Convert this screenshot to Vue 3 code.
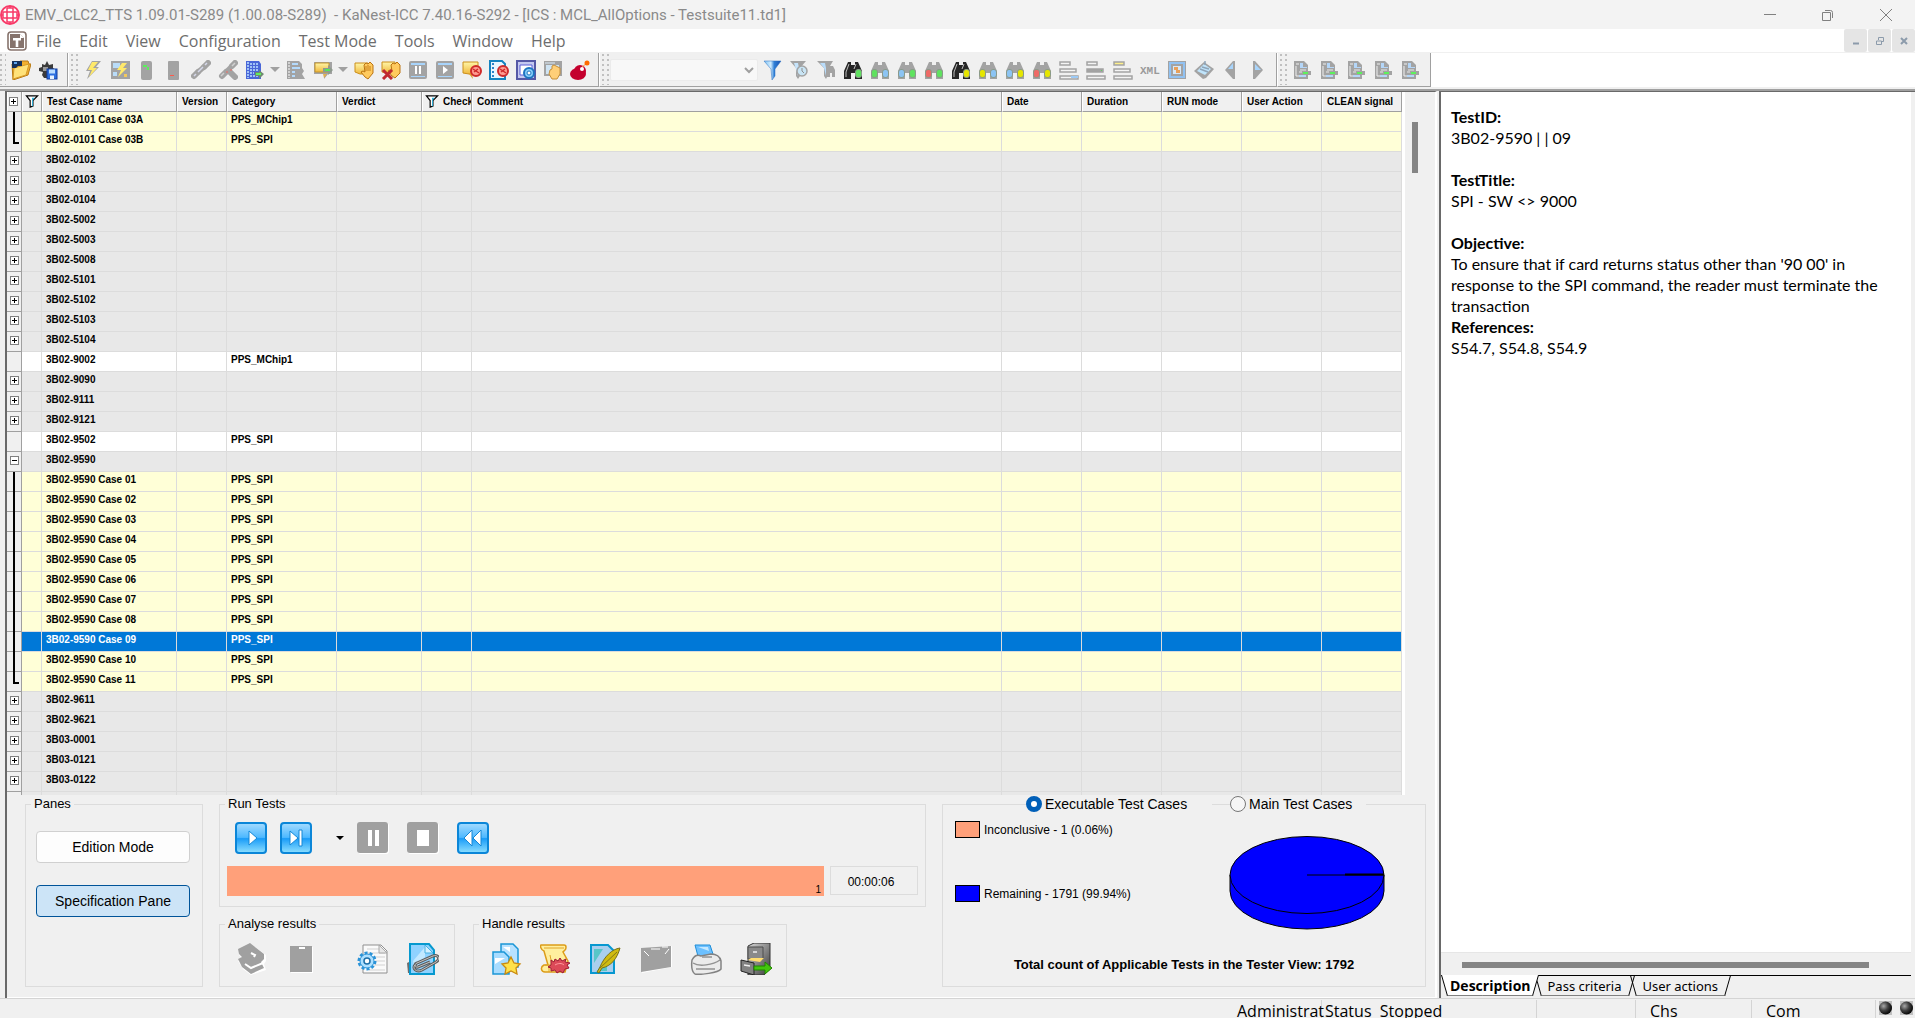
<template>
  <div class="app">
    <svg class="sprite" width="0" height="0" aria-hidden="true">
      <defs>
        <linearGradient id="gBlue" x1="0" y1="0" x2="0" y2="1">
          <stop offset="0" stop-color="#a6dcff" />
          <stop offset="0.48" stop-color="#4db8ff" />
          <stop offset="0.52" stop-color="#1a9cf8" />
          <stop offset="1" stop-color="#8fe0ff" />
        </linearGradient>
        <linearGradient id="gGold" x1="0" y1="0" x2="0" y2="1">
          <stop offset="0" stop-color="#fff6a8" />
          <stop offset="1" stop-color="#f0b83c" />
        </linearGradient>
        <linearGradient id="gFunnel" x1="0" y1="0" x2="1" y2="0">
          <stop offset="0" stop-color="#7cc0f0" />
          <stop offset="0.4" stop-color="#d0ecff" />
          <stop offset="0.6" stop-color="#2f7fd6" />
          <stop offset="1" stop-color="#1a50b0" />
        </linearGradient>
        <linearGradient id="gSteel" x1="0" y1="0" x2="1" y2="1">
          <stop offset="0" stop-color="#d8d8d8" />
          <stop offset="1" stop-color="#3a3a3a" />
        </linearGradient>
        <radialGradient id="gBall" cx="0.35" cy="0.35" r="0.7">
          <stop offset="0" stop-color="#a8a8a8" />
          <stop offset="0.5" stop-color="#404040" />
          <stop offset="1" stop-color="#000" />
        </radialGradient>
      </defs>

      <symbol id="logo" viewBox="0 0 20 20">
        <circle cx="10" cy="10" r="9" fill="#fff" stroke="#f83a68" stroke-width="2" />
        <path d="M7 3v4H3M7 3h6v4H3v6h4v4h6v-4h4V7h-4M7 7v6h6V7M10 1v2M10 17v2M1 10h2M17 10h2" fill="none" stroke="#f83a68" stroke-width="1.500" />
      </symbol>
      <symbol id="mdi" viewBox="0 0 20 20">
        <rect x="1" y="1" width="18" height="18" rx="3" fill="#fff" stroke="#86736c" stroke-width="1.600" />
        <path d="M3 3h10l4 4v10H3z" fill="#86736c" />
        <path d="M13 3v4h4" fill="#fff" />
        <path d="M6 7h8v2.500h-2.700V16H8.700V9.500H6z" fill="#fff" />
      </symbol>
      <symbol id="open" viewBox="0 0 20 20">
        <path d="M1 4h6l2-3h8l1 3h2l-3 11-15 5z" fill="#f2b030" stroke="#b87914" />
        <path d="M3 8l15-4-3 11-13 4z" fill="#ffe27a" stroke="#d69a28" />
        <path d="M1 1h10v5H7L5 8H1z" fill="#16325c" />
        <path d="M3 2h3v2H3z" fill="#5fa6f0" />
      </symbol>
      <symbol id="save" viewBox="0 0 20 20">
        <path d="M1 8l3-1V4l3 1 2-4 2 4 4-1v4l3 2-3 2v6H6l-2-3 1-3-4-1z" fill="#3b3b3b" />
        <path d="M5 7h5v4H5z" fill="#999" />
        <rect x="9" y="9" width="10" height="10" fill="#2d6fe0" stroke="#123c9c" />
        <path d="M11 9.500h6v4h-6z" fill="#b9dcff" />
        <path d="M12 15.500h4V19h-4z" fill="#e8f3ff" />
      </symbol>
      <symbol id="bolt" viewBox="0 0 20 20">
        <path d="M9 1h9l-5 6h3L4 19l3-8H3z" fill="#a3a3a3" />
        <path d="M9 2h6l-5 6h4l-8 9 3-7H5z" fill="#ffe96a" />
      </symbol>
      <symbol id="boltTable" viewBox="0 0 20 20">
        <path d="M1 1h19v18H1z" fill="#a3a3a3" />
        <path d="M3 3h7v5H3zM3 12h4v4H3z" fill="#b9dcf8" />
        <path d="M12 3h5l-4 5h4l-9 9 3-7H7z" fill="#ffe96a" />
        <path d="M14 14h3v3h-3z" fill="#f3c95b" />
      </symbol>
      <symbol id="devGreen" viewBox="0 0 20 20">
        <rect x="4" y="1" width="11" height="19" rx="2" fill="#a3a3a3" />
        <path d="M6 5h4v2h2v3h-2V7H6z" fill="#5cf05c" />
      </symbol>
      <symbol id="devRed" viewBox="0 0 20 20">
        <rect x="4" y="1" width="11" height="19" rx="1" fill="#a3a3a3" />
        <path d="M6 15h4v1H6z" fill="#ff5a4a" />
      </symbol>
      <symbol id="link" viewBox="0 0 20 20">
        <path d="M3 16l4-4M13 7l4-4" stroke="#a3a3a3" stroke-width="6" stroke-linecap="round" />
        <path d="M6 13l8-7" stroke="#a3a3a3" stroke-width="5" />
        <path d="M7 12l5-5M3 16l2-2M14 5l2-2" stroke="#d5d8ea" stroke-width="1.500" />
      </symbol>
      <symbol id="unlink" viewBox="0 0 20 20">
        <path d="M4 16l4-4M14 6l3-3M12 12l5 5" stroke="#a3a3a3" stroke-width="6" stroke-linecap="round" />
        <path d="M8 12l6-6" stroke="#a3a3a3" stroke-width="5" />
        <path d="M3 16l3-3M14 6l3-3" stroke="#d0d0d0" stroke-width="1.500" />
        <path d="M8 12h2M12 10h2" stroke="#ef6a60" />
      </symbol>
      <symbol id="listGo" viewBox="0 0 20 20">
        <path d="M1 1h13l2 3v15H1z" fill="#4a67d8" />
        <path d="M3 2v16M5 4h8M5 7h9M5 10h8M5 13h4M5 16h8" stroke="#bfe2ff" stroke-width="1.500" stroke-dasharray="2 1" />
        <path d="M10 12h4v-2l5 4-5 5v-3h-4z" fill="#6f8a70" />
        <path d="M11 13h5v2h-5z" fill="#5ff05f" />
      </symbol>
      <symbol id="listFind" viewBox="0 0 20 20">
        <path d="M1 1h12l3 3v4l2 3-2 3 3 5H1z" fill="#a3a3a3" />
        <path d="M3 2v16" stroke="#fff" stroke-dasharray="2 1" />
        <path d="M6 3h6v2H6zM6 7h8v2H6zM6 11h3v2H6zM6 15h3v2H6z" fill="#b4dafc" />
      </symbol>
      <symbol id="noteGo" viewBox="0 0 20 20">
        <path d="M1 2h18v12h-4l-4 5v-5H1z" fill="#a3a3a3" />
        <path d="M2 3h14v9H2z" fill="url(#gGold)" stroke="#c8962a" />
        <path d="M10 14h4l-3 4z" fill="#e0b050" />
        <path d="M10 8h5V5l5 5-5 5v-3h-5z" fill="#8f9b8f" />
        <path d="M12 9h5v2h-5z" fill="#57e857" />
      </symbol>
      <symbol id="noteHand" viewBox="0 0 20 20">
        <path d="M1 3h13v11H6l-5-2z" fill="url(#gGold)" stroke="#cc8f1a" />
        <path d="M10 5l2-2 2 1 2-2 3 3v8l-5 6-3-2-4-5 2-1 2 1z" fill="#ffca5e" stroke="#bb7412" />
        <path d="M12 6v5M14 5v6M16 6v5" stroke="#c67e18" />
      </symbol>
      <symbol id="noteHandX" viewBox="0 0 20 20">
        <path d="M1 2h13v11H6l-5-1z" fill="url(#gGold)" stroke="#cc8f1a" />
        <path d="M10 5l2-2 2 1 2-2 3 3v8l-5 5-3-2-4-5 2-1 2 1z" fill="#ffca5e" stroke="#bb7412" />
        <path d="M2 10l9 9M11 10l-9 9" stroke="#c02a30" stroke-width="3" />
      </symbol>
      <symbol id="pauseBox" viewBox="0 0 20 20">
        <rect x="1" y="1" width="18" height="18" rx="2" fill="#a3a3a3" />
        <path d="M3 3h14v2H3zM3 16h14v1H3z" fill="#a8d4fb" />
        <path d="M8 6v8M12 6v8" stroke="#fff" stroke-width="2" />
      </symbol>
      <symbol id="playBox" viewBox="0 0 20 20">
        <rect x="1" y="1" width="18" height="18" rx="2" fill="#a3a3a3" />
        <path d="M3 3h14v2H3zM3 16h14v1H3z" fill="#a8d4fb" />
        <path d="M8 6l5 4-5 4z" fill="#fff" />
      </symbol>
      <symbol id="noteStop" viewBox="0 0 20 20">
        <path d="M1 2h15v12H7l-6-1z" fill="url(#gGold)" stroke="#cc8f1a" />
        <path d="M7 14l4 5-1-5z" fill="#dfa030" />
        <circle cx="14" cy="11" r="5" fill="#ff9b90" stroke="#cf2a2a" stroke-width="2" />
        <path d="M11 9l6 4M12 12l4-3" stroke="#cf2a2a" stroke-width="1.500" />
      </symbol>
      <symbol id="filmStop" viewBox="0 0 20 20">
        <path d="M1 1h12l3 3v15H1z" fill="#eaf6ff" stroke="#1583c0" stroke-width="2" />
        <path d="M4 3v15" stroke="#2f83c8" stroke-width="2" stroke-dasharray="2 2" />
        <circle cx="14" cy="11" r="5" fill="#ff9b90" stroke="#cf2a2a" stroke-width="2" />
        <path d="M11 9l6 4M12 12l4-3" stroke="#cf2a2a" stroke-width="1.500" />
      </symbol>
      <symbol id="target" viewBox="0 0 20 20">
        <path d="M1 1h18v18H1z" fill="#c4c8f0" stroke="#5558a6" stroke-width="2" />
        <path d="M4 5h12v10H4z" fill="#fff" stroke="#5a5ed8" />
        <circle cx="13" cy="13" r="5" fill="#86cdf8" stroke="#1c74c0" stroke-width="2" />
        <circle cx="13" cy="13" r="2" fill="#fff" stroke="#1c74c0" />
      </symbol>
      <symbol id="winHand" viewBox="0 0 20 20">
        <path d="M1 1h18v15H1z" fill="#a3a3a3" />
        <path d="M3 5h13v9H3z" fill="#cfe4f4" />
        <path d="M2 3h10" stroke="#dcecfa" />
        <path d="M7 10l2-1V6l2-1 2 1 2 1 2 1v6l-3 5H9l-3-5z" fill="#ffcf78" stroke="#c58f3a" />
      </symbol>
      <symbol id="bomb" viewBox="0 0 20 20">
        <ellipse cx="8" cy="14" rx="8" ry="6" fill="#c4002e" />
        <ellipse cx="10" cy="11" rx="6" ry="6" fill="#c4002e" />
        <path d="M12 7l5-4" stroke="#ff9a40" />
        <circle cx="12" cy="9" r="2" fill="#fff" />
        <circle cx="17" cy="3" r="2.500" fill="#ff6a00" />
      </symbol>
      <symbol id="funnel" viewBox="0 0 20 20">
        <path d="M2 1h17l-6 8v7l-3 4-1-11z" fill="url(#gFunnel)" stroke="#2b6fc0" stroke-width="0.500" />
      </symbol>
      <symbol id="funnelFind" viewBox="0 0 20 20">
        <path d="M1 1h16l-6 7v8l-2 3-2-3V8z" fill="#a3a3a3" />
        <path d="M5 3h4l1 5-1 8z" fill="#c5e4fc" />
        <circle cx="13" cy="11" r="5" fill="#c8e4f4" stroke="#a3a3a3" stroke-width="1.500" />
        <path d="M13 8v3l2 2" stroke="#8d8d8d" fill="none" />
      </symbol>
      <symbol id="funnelBin" viewBox="0 0 20 20">
        <path d="M1 1h16l-3 5h3l2 4v7h-3v-4h-2v4h-3l-1 2-2-3V8z" fill="#a3a3a3" />
        <path d="M4 3h5l1 5v8L8 8z" fill="#b9dcfa" />
      </symbol>
      <symbol id="bin" viewBox="0 0 20 20">
        <path d="M5 2h3v3h4V2h3l4 9v8h-7v-6H8v6H1v-8z" fill="currentColor" />
      </symbol>
      <symbol id="binShine" viewBox="0 0 20 20">
        <path d="M5 2h3v3h4V2h3l4 9v8h-7v-6H8v6H1v-8z" fill="#262626" />
        <path d="M6 4L3 12v5M13 4l-2 5" stroke="#bdbdbd" fill="none" />
      </symbol>
      <symbol id="barsLow" viewBox="0 0 20 20">
        <path d="M1 2h10v3H1zM1 9h16v3H1zM1 16h18v3H1z" fill="#f4f4f4" stroke="#a3a3a3" stroke-width="1.500" />
        <path d="M12 16h7v2h-7z" fill="#9ccaf6" />
      </symbol>
      <symbol id="barsMid" viewBox="0 0 20 20">
        <path d="M1 2h10v3H1zM1 16h18v3H1z" fill="#f4f4f4" stroke="#a3a3a3" stroke-width="1.500" />
        <path d="M1 9h16v3H1z" fill="#a3a3a3" stroke="#a3a3a3" stroke-width="1.500" />
        <path d="M15 10h1v1h-1z" fill="#5fd05f" />
      </symbol>
      <symbol id="barsTop" viewBox="0 0 20 20">
        <path d="M1 9h16v3H1zM1 16h18v3H1z" fill="#f4f4f4" stroke="#a3a3a3" stroke-width="1.500" />
        <path d="M1 2h10v3H1z" fill="#fff08a" stroke="#a3a3a3" stroke-width="1.500" />
      </symbol>
      <symbol id="xml" viewBox="0 0 20 20">
        <text x="0" y="14" font-family="Liberation Mono, monospace" font-size="11" font-weight="700" fill="#9a9a9a">XML</text>
      </symbol>
      <symbol id="frame" viewBox="0 0 20 20">
        <path d="M1 1h18v18H1z" fill="#a3a3a3" />
        <path d="M3 3h14v14H3z" fill="none" stroke="#91c2f2" stroke-width="2" />
        <path d="M6 6h8v8H6z" fill="#d7e8f7" />
        <path d="M7 7h4v3H7zM9 10h4v3H9z" fill="#e8a05a" />
      </symbol>
      <symbol id="diamond" viewBox="0 0 20 20">
        <path d="M10 2l10 7-8 9-3 1-9-8z" fill="#a3a3a3" />
        <path d="M10 4l7 5-6 6-8-4z" fill="#bfe4fb" />
        <path d="M6 9l8 3M8 7l7 2M11 1v4" stroke="#8fa4b8" stroke-width="1.500" />
      </symbol>
      <symbol id="prev" viewBox="0 0 20 20">
        <path d="M14 1v18h-2L4 10l8-9z" fill="#a3a3a3" />
        <path d="M12 3v6H7z" fill="#a8d4fb" />
      </symbol>
      <symbol id="next" viewBox="0 0 20 20">
        <path d="M5 1v18h2l8-9-8-9z" fill="#a3a3a3" />
        <path d="M7 4v6h6z" fill="#a8d4fb" />
      </symbol>
      <symbol id="docGo" viewBox="0 0 20 20">
        <path d="M2 1h10l4 4v6h3v4h-3v4H2z" fill="#a3a3a3" />
        <path d="M4 4h3M4 6v10h8" stroke="#f0f0f0" fill="none" />
        <path d="M8 3h3v4h4v1H8zM7 15h7v2H7z" fill="#b4d6f8" />
        <path d="M8 10h6M7 12h3" stroke="#e8e8e8" />
        <path d="M11 12h5v2h-5z" fill="#5df05d" />
      </symbol>
      <symbol id="thFilter" viewBox="0 0 14 14">
        <path d="M1 1h12L8 6v6l-3 1V6z" fill="#fff" stroke="#000" stroke-width="1.300" />
        <path d="M7 3h3L8 5v7H7z" fill="#2fb4e0" />
      </symbol>

      <symbol id="runPlay" viewBox="0 0 32 32">
        <rect x="1" y="1" width="30" height="30" rx="3" fill="url(#gBlue)" stroke="#0b86d8" stroke-width="2" />
        <path d="M14 9l8 7-8 7z" fill="#fff" stroke="#1487d6" />
      </symbol>
      <symbol id="runStep" viewBox="0 0 32 32">
        <rect x="1" y="1" width="30" height="30" rx="3" fill="url(#gBlue)" stroke="#0b86d8" stroke-width="2" />
        <path d="M10 9l8 7-8 7zM19 8h3v16h-3z" fill="#fff" stroke="#1487d6" />
      </symbol>
      <symbol id="runPause" viewBox="0 0 32 32">
        <rect x="1" y="1" width="31" height="31" rx="3" fill="#fff" />
        <rect width="31" height="31" rx="3" fill="#a0a0a0" />
        <path d="M11 8h4v16h-4zM18 8h4v16h-4z" fill="#fff" />
      </symbol>
      <symbol id="runStop" viewBox="0 0 32 32">
        <rect x="1" y="1" width="31" height="31" rx="3" fill="#fff" />
        <rect width="31" height="31" rx="3" fill="#a0a0a0" />
        <path d="M10 8h12v16H10z" fill="#fff" />
      </symbol>
      <symbol id="runBack" viewBox="0 0 32 32">
        <rect x="1" y="1" width="30" height="30" rx="3" fill="url(#gBlue)" stroke="#0b86d8" stroke-width="2" />
        <path d="M15 8v16l-8-8zM24 8v16l-8-8z" fill="#fff" stroke="#1487d6" />
      </symbol>
      <symbol id="books" viewBox="0 0 32 32">
        <path d="M3 7l12-6 15 11v6l-2 3 2 6-15 5-8-6-5-8 4-2-3-4z" fill="#fff" />
        <path d="M2 6l12-6 14 11v5l-3 3 3 6-13 6-9-7-4-8 4-2-3-3z" fill="#a0a0a0" />
        <path d="M9 21l6 4 12-5M15 10l4 2-1 2" stroke="#fff" stroke-width="2" fill="none" />
      </symbol>
      <symbol id="board" viewBox="0 0 32 32">
        <path d="M5 4h22v26H5z" fill="#fff" />
        <path d="M4 3h22v26H4z" fill="#a0a0a0" />
        <path d="M14 6V5h5" stroke="#fff" stroke-width="2" fill="none" />
      </symbol>
      <symbol id="docGear" viewBox="0 0 32 32">
        <path d="M6 2h18l6 6v22H6z" fill="#fafafa" stroke="#8f8f8f" />
        <path d="M10 6h12M10 10h18M17 14h11M18 18h10M17 22h11M12 27h16" stroke="#e0e0e0" stroke-width="1.500" />
        <path d="M22 2v8h8z" fill="#e6e6e6" stroke="#a8a8a8" />
        <circle cx="10" cy="18" r="8" fill="none" stroke="#2a93d8" stroke-width="3" stroke-dasharray="3 2" />
        <circle cx="10" cy="18" r="7" fill="#aee0ff" stroke="#2a93d8" />
        <circle cx="10" cy="18" r="3" fill="#fff" stroke="#1c6fa8" stroke-width="1.500" />
      </symbol>
      <symbol id="docClip" viewBox="0 0 32 32">
        <path d="M0 20l4-2v12H1z" fill="#6d6d6d" />
        <path d="M3 1h19l5 6v24H3z" fill="#8fd2ff" stroke="#0699cf" stroke-width="2" />
        <path d="M6 18L18 4v10L8 27z" fill="#c2e8ff" />
        <path d="M18 2v8h8z" fill="#d5f0ff" stroke="#4ab0e0" />
        <path d="M23 19l-12 5c-3 1-4-3-1-4l16-7c5-2 8 3 3 6l-14 8c-6 3-10-2-7-5" fill="none" stroke="#5d5d5d" stroke-width="3" />
        <path d="M23 19l-12 5c-3 1-4-3-1-4l16-7c5-2 8 3 3 6l-14 8c-6 3-10-2-7-5" fill="none" stroke="#c4c4c4" />
      </symbol>
      <symbol id="docStar" viewBox="0 0 32 32">
        <path d="M11 1h12l5 5v18H11z" fill="#b8e2ff" stroke="#1b96d6" stroke-width="1.500" />
        <path d="M3 9h11l5 5v17H3z" fill="#a8dcff" stroke="#1b96d6" stroke-width="1.500" />
        <path d="M5 15h10l-10 6zM13 4h7v5z" fill="#fff" />
        <path d="M21 14l3 6 6 1-4 4 1 6-6-3-6 3 1-6-4-4 6-1z" fill="#ffe14a" stroke="#c98a10" stroke-width="1.300" />
      </symbol>
      <symbol id="scroll" viewBox="0 0 32 32">
        <path d="M1 2h23c3 0 2 4 1 5l-2 2 5 9-3 11H5c-4 0-5-5-1-7h4L4 8C1 7 0 3 1 2z" fill="#ffef9e" stroke="#dc9c18" stroke-width="1.500" />
        <path d="M4 5h20M10 12l2 10H5M9 22v7" stroke="#e0a428" fill="none" />
        <path d="M11 17l3 2 1-3 3 2 2-3 2 3 4-2-1 3 5 1-3 2 2 3-4 1-2 4-3-2-3 2-2-3-4 1v-3l-3-1 3-2z" fill="#dc4a58" stroke="#9c1c34" />
        <path d="M15 22c3-2 7-2 9 0" stroke="#ff9aa0" fill="none" />
      </symbol>
      <symbol id="docFeather" viewBox="0 0 32 32">
        <path d="M1 2h17l6 6v22H1z" fill="#a9cfee" stroke="#0898d0" stroke-width="2" />
        <path d="M4 6h9L4 20zM7 28l10-12v12z" fill="#58c6c8" />
        <path d="M30 5c-8 1-16 9-20 19l-3 5 2 1 3-5c9-2 15-9 18-20z" fill="#d0bb10" stroke="#77701c" />
        <path d="M27 9L10 25" stroke="#857818" />
      </symbol>
      <symbol id="envelope" viewBox="0 0 32 32">
        <path d="M2 6l30-3v21L2 30z" fill="#fff" />
        <path d="M1 5l30-2v21L1 29z" fill="#a0a0a0" />
        <path d="M4 8l5 5M29 6l-4 5M11 6h9M22 4h6" stroke="#fff" />
      </symbol>
      <symbol id="printer" viewBox="0 0 32 32">
        <path d="M5 2h15l4 12-15 3z" fill="#6cc0ff" stroke="#1e8ed8" />
        <path d="M8 4h10l1 4z" fill="#c4e8ff" />
        <path d="M2 17c2-4 5-6 9-4l10-2c6 0 9 3 10 7v8c-3 4-21 6-26 5-3-2-4-6-3-14z" fill="#ebebeb" stroke="#828282" stroke-width="1.500" />
        <path d="M3 20c6 4 20 2 27-3M6 26h19M12 14h10" stroke="#929292" stroke-width="1.500" fill="none" />
      </symbol>
      <symbol id="cabinet" viewBox="0 0 32 32">
        <path d="M8 3l6-3h16v25l-6 7H8z" fill="url(#gSteel)" stroke="#333" />
        <path d="M8 4h15v12H8z" fill="#8a8a8a" stroke="#4c4c4c" />
        <path d="M8 17l3-2h13l-4 4z" fill="#ffdd70" />
        <path d="M1 17l13 3v12L1 28z" fill="#828282" stroke="#222" />
        <path d="M4 22l6 1M13 9h4" stroke="#eee" stroke-width="1.500" />
        <path d="M14 23h11v-4l7 6-7 6v-4H14z" fill="#42c60c" stroke="#218400" />
      </symbol>
    </svg>

    <header class="titlebar">
      <svg class="icon"><use href="#logo" /></svg>
      <h1>EMV_CLC2_TTS 1.09.01-S289 (1.00.08-S289)&nbsp; - KaNest-ICC 7.40.16-S292 - [ICS : MCL_AllOptions - Testsuite11.td1]</h1>
      <div class="window-controls">
        <button aria-label="Minimize"><svg width="12" height="12"><path d="M0 5.500h12" /></svg></button>
        <button aria-label="Restore"><svg width="12" height="12"><path d="M0.500 3.500h8v8h-8zM3 1.500h5.500a2 2 0 0 1 2 2V9" /></svg></button>
        <button aria-label="Close"><svg width="12" height="12"><path d="M0 0l12 12M12 0L0 12" /></svg></button>
      </div>
    </header>

    <nav class="menubar">
      <svg class="icon"><use href="#mdi" /></svg>
      <button v-for="item in menus" :key="item">{{ item }}</button>
      <div class="mdi-controls">
        <button aria-label="Minimize document"><svg width="8" height="8"><path d="M1 6.500h6" stroke-width="2" /></svg></button>
        <button aria-label="Restore document"><svg width="8" height="8"><path d="M0.500 4h5v3.500h-5zM2.500 3V0.500h5v4H6" /></svg></button>
        <button aria-label="Close document"><svg width="8" height="8"><path d="M1 1l6 6M7 1L1 7" stroke-width="2" /></svg></button>
      </div>
    </nav>

    <div class="toolbars">
      <div v-for="(bar, index) in toolbars" :key="index" class="toolbar">
        <span class="grip"></span>
        <select v-if="bar.combo" class="combo" aria-label="Filter">
          <option></option>
        </select>
        <template v-for="tool in bar.tools" :key="tool.label">
          <button class="tool" :aria-label="tool.label">
            <svg class="icon" :class="{ dim: tool.dim }"><use :href="'#' + tool.icon" /></svg>
            <span v-if="tool.dot" class="dot" :style="{ background: tool.dot }"></span>
            <span v-if="tool.mark" class="mark" :style="{ background: tool.mark }"></span>
          </button>
          <button v-if="tool.menu" class="drop" :aria-label="tool.label + ' menu'"></button>
        </template>
      </div>
    </div>

    <main class="workspace">
      <section class="tester">
        <div class="grid-wrap">
          <div class="grid">
            <table>
              <colgroup>
                <col v-for="col in columns" :key="col.key" :class="'col-' + col.key" />
              </colgroup>
              <thead>
                <tr>
                  <th v-for="col in columns" :key="col.key">
                    <button v-if="col.key === 'tree'" class="expander" aria-label="Expand all">
                      <svg width="9" height="9"><path d="M2 4.500h5M4.500 2v5" /></svg>
                    </button>
                    <svg v-if="col.filter" class="filter"><use href="#thFilter" /></svg>
                    <span>{{ col.label }}</span>
                  </th>
                </tr>
              </thead>
              <tbody>
                <tr v-for="row in rows" :key="row.name" :class="[row.type, { selected: row.name === selected }]" @click="selected = row.name">
                  <td class="tree" :class="row.line">
                    <button v-if="row.type === 'group'" class="expander" :aria-label="row.open ? 'Collapse' : 'Expand'">
                      <svg width="9" height="9"><path :d="row.open ? 'M2 4.500h5' : 'M2 4.500h5M4.500 2v5'" /></svg>
                    </button>
                  </td>
                  <td></td>
                  <td>{{ row.name }}</td>
                  <td></td>
                  <td>{{ row.category }}</td>
                  <td v-for="n in 8" :key="n"></td>
                </tr>
              </tbody>
            </table>
          </div>
          <div class="vscroll"><div class="thumb"></div></div>
        </div>

        <div class="controls">
          <fieldset class="panes">
            <legend>Panes</legend>
            <button>Edition Mode</button>
            <button class="pressed">Specification Pane</button>
          </fieldset>

          <div class="middle">
            <fieldset class="run">
              <legend>Run Tests</legend>
              <div class="run-buttons">
                <button aria-label="Run"><svg><use href="#runPlay" /></svg></button>
                <button aria-label="Run step"><svg><use href="#runStep" /></svg></button>
                <button class="run-menu" aria-label="Run options"></button>
                <button aria-label="Pause"><svg><use href="#runPause" /></svg></button>
                <button aria-label="Stop"><svg><use href="#runStop" /></svg></button>
                <button aria-label="Rewind"><svg><use href="#runBack" /></svg></button>
              </div>
              <div class="run-progress">
                <div class="progress"><span>1</span></div>
                <div class="timer">00:00:06</div>
              </div>
            </fieldset>
            <div class="results">
              <fieldset class="analyse">
                <legend>Analyse results</legend>
                <div class="result-buttons">
                  <button v-for="icon in analyseIcons" :key="icon" :class="icon" :aria-label="icon">
                    <svg><use :href="'#' + icon" /></svg>
                  </button>
                </div>
              </fieldset>
              <fieldset class="handle">
                <legend>Handle results</legend>
                <div class="result-buttons">
                  <button v-for="icon in handleIcons" :key="icon" :aria-label="icon">
                    <svg><use :href="'#' + icon" /></svg>
                  </button>
                </div>
              </fieldset>
            </div>
          </div>

          <div class="stats">
            <div class="modes">
              <label class="mode-exec"><input v-model="mode" type="radio" name="mode" value="exec" />Executable Test Cases</label>
              <label class="mode-main"><input v-model="mode" type="radio" name="mode" value="main" />Main Test Cases</label>
            </div>
            <div class="chart">
              <ul>
                <li v-for="entry in legend" :key="entry.label">
                  <span class="swatch" :style="{ background: entry.color }"></span>{{ entry.label }}
                </li>
              </ul>
              <svg class="pie" width="156" height="96" viewBox="0 0 156 96">
                <path d="M1 40v16a77 38 0 0 0 154 0V40z" fill="#00f" stroke="#000" />
                <ellipse cx="78" cy="40" rx="77" ry="38.500" fill="#00f" stroke="#000" />
                <path d="M78 40h77" stroke="#000" />
                <path d="M116 39.500h39" stroke="#000" stroke-width="2" />
              </svg>
            </div>
            <p class="total">Total count of Applicable Tests in the Tester View: 1792</p>
          </div>
        </div>
      </section>

      <aside class="spec">
        <article>
          <template v-for="part in description" :key="part.title">
            <h2>{{ part.title }}</h2>
            <p :class="{ tight: part.tight }">{{ part.text }}</p>
          </template>
        </article>
        <div class="hscroll"><div class="thumb"></div></div>
        <div class="tabs">
          <button v-for="tab in tabs" :key="tab" :class="{ active: tab === activeTab }" @click="activeTab = tab">{{ tab }}</button>
        </div>
      </aside>
    </main>

    <footer class="statusbar">
      <span class="user">Administrat</span>
      <span class="state">Status&nbsp; Stopped</span>
      <span class="blank"></span>
      <span class="chs">Chs</span>
      <span class="com">Com</span>
      <span class="lamps">
        <svg v-for="n in 2" :key="n" width="13" height="14"><rect width="13" height="14" fill="#c0c0c0" /><circle cx="6.500" cy="7" r="6.500" fill="url(#gBall)" /></svg>
      </span>
    </footer>
  </div>
</template>

<script setup>
import { ref } from 'vue'

const menus = ['File', 'Edit', 'View', 'Configuration', 'Test Mode', 'Tools', 'Window', 'Help']

const GREEN = '#5fe25f'
const YELLOW = '#e6e600'

const toolbars = [
  {
    tools: [
      { icon: 'open', label: 'Open' },
      { icon: 'save', label: 'Save' }
    ]
  },
  {
    tools: [
      { icon: 'bolt', label: 'Connect' },
      { icon: 'boltTable', label: 'Connect table' },
      { icon: 'devGreen', label: 'Device on' },
      { icon: 'devRed', label: 'Device off' },
      { icon: 'link', label: 'Link' },
      { icon: 'unlink', label: 'Unlink' },
      { icon: 'listGo', label: 'Run list', menu: true },
      { icon: 'listFind', label: 'Find in list' },
      { icon: 'noteGo', label: 'Go to note', menu: true },
      { icon: 'noteHand', label: 'Hold' },
      { icon: 'noteHandX', label: 'Remove hold' },
      { icon: 'pauseBox', label: 'Pause' },
      { icon: 'playBox', label: 'Play' },
      { icon: 'noteStop', label: 'Stop note' },
      { icon: 'filmStop', label: 'Stop log' },
      { icon: 'target', label: 'Target' },
      { icon: 'winHand', label: 'Manual window' },
      { icon: 'bomb', label: 'Abort' }
    ]
  },
  {
    combo: true,
    tools: [
      { icon: 'funnel', label: 'Filter' },
      { icon: 'funnelFind', label: 'Filter by time' },
      { icon: 'funnelBin', label: 'Filter search' },
      { icon: 'binShine', label: 'Find 1', dot: GREEN },
      { icon: 'bin', label: 'Find next 1', dim: true, dot: '#8cc4f4', mark: GREEN },
      { icon: 'bin', label: 'Find previous 1', dim: true, dot: GREEN, mark: '#8cc4f4' },
      { icon: 'bin', label: 'Clear find 1', dim: true, dot: GREEN, mark: '#ee6a66' },
      { icon: 'binShine', label: 'Find 2', dot: YELLOW },
      { icon: 'bin', label: 'Find next 2', dim: true, dot: '#8cc4f4', mark: YELLOW },
      { icon: 'bin', label: 'Find previous 2', dim: true, dot: YELLOW, mark: '#8cc4f4' },
      { icon: 'bin', label: 'Clear find 2', dim: true, dot: YELLOW, mark: '#ee6a66' },
      { icon: 'barsLow', label: 'Low level' },
      { icon: 'barsMid', label: 'Middle level' },
      { icon: 'barsTop', label: 'Top level' },
      { icon: 'xml', label: 'XML' },
      { icon: 'frame', label: 'Frame' },
      { icon: 'diamond', label: 'Pin' },
      { icon: 'prev', label: 'Previous' },
      { icon: 'next', label: 'Next' }
    ]
  },
  {
    tools: [1, 2, 3, 4, 5].map((n) => ({ icon: 'docGo', label: 'Export ' + n }))
  }
]

const columns = [
  { key: 'tree', label: '' },
  { key: 'filter', label: '', filter: true },
  { key: 'name', label: 'Test Case name' },
  { key: 'version', label: 'Version' },
  { key: 'category', label: 'Category' },
  { key: 'verdict', label: 'Verdict' },
  { key: 'check', label: 'Check', filter: true },
  { key: 'comment', label: 'Comment' },
  { key: 'date', label: 'Date' },
  { key: 'duration', label: 'Duration' },
  { key: 'run', label: 'RUN mode' },
  { key: 'action', label: 'User Action' },
  { key: 'clean', label: 'CLEAN signal' }
]

const group = (name, open = false) => ({ name, type: 'group', open })
const single = (name, category) => ({ name, category, type: 'single' })
const step = (name, category, last = false) => ({ name, category, type: 'case', line: last ? 'line-end' : 'line' })

const rows = [
  step('3B02-0101 Case 03A', 'PPS_MChip1'),
  step('3B02-0101 Case 03B', 'PPS_SPI', true),
  ...['0102', '0103', '0104', '5002', '5003', '5008', '5101', '5102', '5103', '5104'].map((n) => group('3B02-' + n)),
  single('3B02-9002', 'PPS_MChip1'),
  ...['9090', '9111', '9121'].map((n) => group('3B02-' + n)),
  single('3B02-9502', 'PPS_SPI'),
  group('3B02-9590', true),
  ...Array.from({ length: 11 }, (_, i) => step('3B02-9590 Case ' + String(i + 1).padStart(2, '0'), 'PPS_SPI', i === 10)),
  ...['3B02-9611', '3B02-9621', '3B03-0001', '3B03-0121', '3B03-0122'].map((n) => group(n)),
  group('')
]

const selected = ref('3B02-9590 Case 09')

const analyseIcons = ['books', 'board', 'docGear', 'docClip']
const handleIcons = ['docStar', 'scroll', 'docFeather', 'envelope', 'printer', 'cabinet']

const mode = ref('exec')
const legend = [
  { label: 'Inconclusive - 1 (0.06%)', color: '#ffa07a' },
  { label: 'Remaining - 1791 (99.94%)', color: '#0000ff' }
]

const description = [
  { title: 'TestID:', text: '3B02-9590 | | 09' },
  { title: 'TestTitle:', text: 'SPI - SW <> 9000' },
  {
    title: 'Objective:',
    text: "To ensure that if card returns status other than '90 00' in response to the SPI command, the reader must terminate the transaction",
    tight: true
  },
  { title: 'References:', text: 'S54.7, S54.8, S54.9' }
]

const tabs = ['Description', 'Pass criteria', 'User actions']
const activeTab = ref('Description')
</script>

<style>
body {
  margin: 0;
  overflow: hidden;
}
</style>

<style scoped>
.app {
  display: flex;
  flex-direction: column;
  height: 100vh;
  background: #f0f0f0;
  color: #000;
  font-family: "Liberation Sans", Arial, sans-serif;
  font-size: 13px;
}

.sprite {
  position: absolute;
}

button {
  padding: 0;
  border: 0;
  background: none;
  font: inherit;
  color: inherit;
}

.icon {
  width: 20px;
  height: 20px;
  flex: none;
}

/* title and menu */
.titlebar {
  display: flex;
  align-items: center;
  flex: none;
  height: 29px;
  background: #f3f3f3;
}

.titlebar h1 {
  flex: 1;
  margin: 0 0 0 5px;
  font: 400 15px Roboto, "Open Sans", sans-serif;
  color: #8a8a8a;
  white-space: nowrap;
}

.window-controls {
  display: flex;
}

.window-controls button {
  display: flex;
  align-items: center;
  justify-content: center;
  width: 58px;
  height: 28px;
}

.window-controls svg,
.mdi-controls svg {
  fill: none;
  stroke: #808080;
}

.menubar {
  display: flex;
  align-items: center;
  flex: none;
  height: 23px;
  padding-left: 7px;
  border-bottom: 1px solid #f0f0f0;
  background: #fff;
}

.menubar > button {
  margin-left: 9px;
  padding-right: 9px;
  font: 400 16px/24px "Open Sans", "Noto Sans", sans-serif;
  color: #6d6d6d;
}

.mdi-controls {
  display: flex;
  gap: 1px;
  margin-left: auto;
}

.mdi-controls button {
  width: 23px;
  height: 23px;
  border-radius: 2px;
  background: #e5e5e5;
}

.mdi-controls svg {
  stroke: #8c9bab;
}

/* toolbars */
.toolbars {
  display: flex;
  flex: none;
  height: 34px;
  background: #fff;
  border-bottom: 2px solid #f0f0f0;
}

.toolbar {
  display: flex;
  align-items: center;
  padding-right: 5px;
  border-right: 1px solid #a0a0a0;
  border-bottom: 1px solid #a0a0a0;
  border-left: 1px solid #fff;
  background: #f0f0f0;
}

.toolbar:first-child {
  padding-right: 6px;
  border-left: 0;
}

.toolbar:last-child {
  padding-right: 7px;
}

.grip {
  width: 7px;
  height: 31px;
  margin: 0 1px 0 2px;
  background-image: radial-gradient(circle at 1px 1px, #c0c0c0 1px, transparent 1px);
  background-size: 5px 5px;
}

.toolbar:first-child .grip {
  width: 6px;
  margin-left: 0;
}

.tool {
  position: relative;
  display: flex;
  justify-content: center;
  width: 27px;
}

.dim {
  color: #a3a3a3;
}

.dot,
.mark {
  position: absolute;
  bottom: 2px;
  width: 5px;
  height: 7px;
  border: 1px solid #8a9a8a;
  border-radius: 3px;
}

.dot {
  right: 4px;
}

.mark {
  left: 5px;
}

.drop {
  width: 14px;
  height: 20px;
  display: flex;
  align-items: center;
  justify-content: center;
}

.drop::before {
  content: "";
  border: 5px solid transparent;
  border-top-color: #a0a0a0;
  border-bottom: 0;
}

.combo {
  width: 148px;
  height: 22px;
  border: 1px solid #ebebeb;
  border-radius: 2px;
  background: #f8f8f8;
  color: #a0a0a0;
}

/* workspace */
.workspace {
  display: flex;
  flex: 1;
  min-height: 0;
  border-top: 2px solid #a0a0a0;
}

.tester {
  display: flex;
  flex-direction: column;
  flex: 1;
  min-width: 0;
  margin-left: 5px;
  border-top: 1px solid #696969;
  border-left: 2px solid #696969;
  border-right: 2px solid #fff;
}

.grid-wrap {
  display: flex;
  flex: 1;
  min-height: 0;
}

.grid {
  flex: 1;
  overflow: hidden;
  border-right: 3px solid #fff;
}

table {
  width: 100%;
  table-layout: fixed;
  border-collapse: separate;
  border-spacing: 0;
  font-size: 10px;
  font-weight: 700;
  line-height: 15px;
}

.col-tree { width: 15px; }
.col-filter { width: 20px; }
.col-name { width: 135px; }
.col-version { width: 50px; }
.col-category { width: 110px; }
.col-verdict { width: 85px; }
.col-check { width: 50px; }
.col-date,
.col-duration,
.col-run,
.col-action,
.col-clean { width: 80px; }

th {
  height: 20px;
  box-sizing: border-box;
  padding: 0 0 1px 4px;
  border-left: 1px solid #fff;
  border-right: 1px solid #a0a0a0;
  border-bottom: 1px solid #a0a0a0;
  background: #f0f0f0;
  text-align: left;
  white-space: nowrap;
  overflow: hidden;
}

th:first-child {
  padding-left: 1px;
}

.filter {
  width: 14px;
  height: 13px;
  margin: 0 4px 0 -2px;
  vertical-align: middle;
}

td {
  height: 20px;
  box-sizing: border-box;
  padding: 0 4px 4px;
  border-right: 1px solid #dcdcdc;
  border-bottom: 1px solid #dcdcdc;
  white-space: nowrap;
}

.group td {
  background: #e8e8e8;
}

.case td {
  background: #ffffd7;
}

.single td {
  background: #fff;
}

.selected td {
  background: #0078d7;
  color: #fff;
}

tr td.tree {
  position: relative;
  padding: 0 0 2px 3px;
  border-right: 1px solid #a0a0a0;
  border-bottom: 1px solid #a0a0a0;
  background: #f0f0f0;
}

.line::before,
.line-end::before {
  content: "";
  position: absolute;
  top: 0;
  left: 6px;
  width: 2px;
  height: 20px;
  background: #000;
}

.line-end::before {
  width: 4px;
  height: 10px;
  border-left: 2px solid #000;
  border-bottom: 2px solid #000;
  background: none;
}

.expander {
  display: block;
  width: 9px;
  height: 9px;
  outline: 1px solid #808080;
  outline-offset: -1px;
  background: #fff;
}

.expander svg {
  display: block;
  stroke: #000;
}

.vscroll {
  width: 30px;
}

.vscroll .thumb {
  width: 6px;
  height: 51px;
  margin: 30px 0 0 7px;
  background: #858585;
}

/* lower controls */
.controls {
  display: flex;
  flex: none;
  gap: 16px;
  padding: 0 9px 10px 18px;
  border-bottom: 1px solid #fff;
}

fieldset {
  margin: 0;
  padding: 0;
  border: 1px solid #dcdcdc;
  box-sizing: border-box;
  min-width: 0;
}

legend {
  height: 18px;
  margin-left: 5px;
  padding: 0 3px;
  line-height: 18px;
}

.panes {
  width: 178px;
}

.panes button {
  display: block;
  width: 154px;
  height: 32px;
  margin: 18px auto 22px 10px;
  border: 1px solid #d0d0d0;
  border-radius: 4px;
  background: #fdfdfd;
  font-size: 14px;
}

.panes button.pressed {
  border-color: #005499;
  background: #cce4f7;
}

.middle {
  flex: 1;
  display: flex;
  flex-direction: column;
  gap: 8px;
}

.run {
  height: 112px;
}

.run-buttons {
  display: flex;
  margin: 9px 0 0 15px;
}

.run-buttons button {
  width: 45px;
  height: 32px;
  text-align: left;
}

.run-buttons button:nth-child(n+4) {
  width: 50px;
}

.run-buttons svg {
  display: block;
  width: 32px;
  height: 32px;
}

.run-buttons .run-menu {
  width: 32px;
  padding-left: 11px;
}

.run-menu::before {
  content: "";
  display: block;
  width: 0;
  border: 4px solid transparent;
  border-top-color: #000;
  border-bottom: 0;
}

.run-progress {
  display: flex;
  gap: 6px;
  margin: 12px 7px 0;
}

.progress {
  flex: 1;
  display: flex;
  align-items: flex-end;
  justify-content: flex-end;
  height: 30px;
  padding-right: 3px;
  box-sizing: border-box;
  background: #ffa07a;
  font-size: 10px;
  line-height: 13px;
}

.timer {
  width: 88px;
  height: 29px;
  box-sizing: border-box;
  padding-right: 6px;
  border: 1px solid #dcdcdc;
  line-height: 30px;
  font-size: 12px;
  text-align: center;
}

.results {
  display: flex;
  gap: 18px;
}

.results fieldset {
  height: 72px;
}

.analyse {
  width: 236px;
}

.handle {
  width: 314px;
}

.result-buttons {
  display: flex;
  padding: 10px 0 0 7px;
}

.result-buttons button {
  width: 50px;
  height: 32px;
}

.result-buttons .docGear {
  margin-left: 21px;
}

.result-buttons svg {
  width: 32px;
  height: 32px;
}

.stats {
  width: 484px;
  box-sizing: border-box;
  margin-top: 9px;
  border: 1px solid #dcdcdc;
}

.modes {
  display: flex;
  gap: 18px;
  margin: -10px 0 0 83px;
}

.modes label {
  display: flex;
  align-items: center;
  gap: 3px;
  height: 18px;
  background: #f0f0f0;
  font-size: 14px;
}

.mode-exec {
  width: 186px;
}

.mode-main {
  width: 136px;
}

.modes input {
  appearance: none;
  width: 16px;
  height: 16px;
  box-sizing: border-box;
  margin: 0;
  border: 1px solid #767676;
  border-radius: 50%;
  background: #f6f6f6;
}

.modes input:checked {
  border: 5px solid #005fb8;
  background: #fff;
}

.chart {
  display: flex;
  justify-content: space-between;
  padding: 8px 40px 0 12px;
}

.chart ul {
  margin: 0;
  padding: 0;
  list-style: none;
  font-size: 12px;
}

.chart li {
  display: flex;
  align-items: center;
  gap: 4px;
  height: 17px;
  margin-bottom: 47px;
}

.swatch {
  width: 25px;
  height: 17px;
  box-sizing: border-box;
  border: 1px solid #000;
}

.pie {
  margin-top: 14px;
}

.total {
  margin: 8px 0 0;
  font-size: 13px;
  font-weight: 700;
  text-align: center;
}

/* specification pane */
.spec {
  display: flex;
  flex-direction: column;
  width: 476px;
  box-sizing: border-box;
  margin-left: 2px;
  padding-right: 4px;
  border-top: 1px solid #696969;
  border-left: 2px solid #696969;
}

.spec article {
  flex: 1;
  padding: 14px 25px 0 10px;
  border-bottom: 1px solid #e6e6e6;
  background: #fff;
  font: 16px/21px Lato, "Open Sans", sans-serif;
}

.spec h2 {
  margin: 0;
  font-size: 16px;
  line-height: 21px;
}

.spec p {
  margin: 0 0 21px;
}

.spec p.tight {
  margin-bottom: 0;
}

.hscroll {
  padding: 9px 42px 7px 21px;
}

.hscroll .thumb {
  height: 6px;
  background: #858585;
}

.tabs {
  display: flex;
  height: 22px;
  border-top: 1px solid #000;
}

.tabs button {
  position: relative;
  z-index: 0;
  height: 20px;
  margin-right: -5px;
  padding: 0 13px;
  font: 13px/20px "Noto Sans", "Open Sans", sans-serif;
}

.tabs button.active {
  z-index: 1;
  padding: 0 9px;
  height: 21px;
  margin-top: -1px;
  font-size: 14px;
  font-weight: 700;
  font-family: "Open Sans", sans-serif;
}

.tabs button::before,
.tabs button::after {
  content: "";
  position: absolute;
  z-index: -1;
  top: 0;
  bottom: 0;
  box-sizing: border-box;
  border-bottom: 1px solid #808080;
}

.tabs button::before {
  left: 3px;
  right: 45%;
  border-left: 1px solid #000;
  transform: skewX(16deg);
}

.tabs button::after {
  left: 45%;
  right: 3px;
  border-right: 1px solid #000;
  transform: skewX(-16deg);
}

.tabs button.active::before,
.tabs button.active::after {
  background: #fff;
}

/* status bar */
.statusbar {
  display: flex;
  justify-content: flex-end;
  flex: none;
  height: 19px;
  border-top: 1px solid #d4d4d4;
  overflow: hidden;
  font: 16px/23px "Open Sans", "Noto Sans", sans-serif;
}

.statusbar span {
  height: 23px;
  box-sizing: border-box;
  margin-top: 1px;
  border-right: 1px solid #d4d4d4;
  white-space: nowrap;
}

.statusbar .user {
  width: 85px;
}

.statusbar .state {
  width: 215px;
  padding-left: 3px;
}

.statusbar .blank {
  width: 99px;
}

.statusbar .chs {
  width: 116px;
  padding-left: 14px;
}

.statusbar .com {
  width: 124px;
  padding-left: 14px;
}

.statusbar .lamps {
  display: flex;
  gap: 8px;
  width: 39px;
  padding: 1px 0 0 3px;
  border: 0;
}
</style>
